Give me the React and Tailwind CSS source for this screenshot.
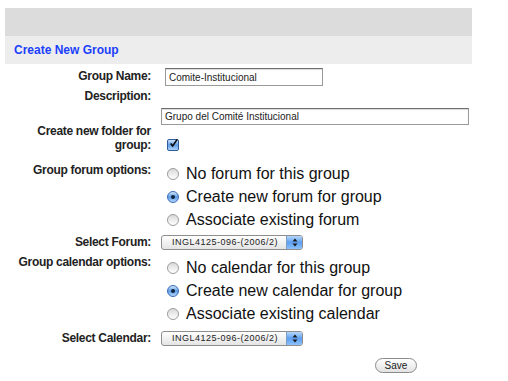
const font = { fontFamily: '"Liberation Sans", Arial, sans-serif' }

function Radio({ checked }) {
  if (checked) {
    return (
      <span className="w-[12px] h-[12px] rounded-full border border-[#3a6cb3] bg-linear-to-b from-[#d2e6fc] via-[#5c9be6] to-[#b4d6fb] flex items-center justify-center shrink-0">
        <span className="w-[4px] h-[4px] rounded-full bg-[#10223d]" />
      </span>
    )
  }
  return <span className="w-[12px] h-[12px] rounded-full border border-[#9c9c9c] bg-linear-to-b from-[#d9d9d9] to-white shrink-0" />
}

function RadioGroup({ options, selected }) {
  return (
    <div className="flex flex-col">
      {options.map((o, i) => (
        <div key={o} className="h-[23px] flex items-center pl-[6px] gap-[7px] text-[16px] text-[#111]">
          <Radio checked={i === selected} />
          <span>{o}</span>
        </div>
      ))}
    </div>
  )
}

function Select() {
  return (
    <div className="w-[142px] h-[15px] rounded-[3px] border border-[#8e8e8e] bg-linear-to-b from-white to-[#e4e4e4] flex items-center overflow-hidden">
      <span className="flex-1 pl-[10px] text-[9px] leading-none tracking-[0.5px] text-[#222]">INGL4125-096-(2006/2)</span>
      <span className="w-[16px] h-full bg-linear-to-b from-[#b6d7fa] via-[#5d9ff0] to-[#8cc2f8] border-l border-[#7a9cc8] flex items-center justify-center">
        <svg width="6" height="9" viewBox="0 0 6 9">
          <path d="M3 0.5 L5.5 3.5 H0.5 Z M3 8.5 L5.5 5.5 H0.5 Z" fill="#1a1a1a" />
        </svg>
      </span>
    </div>
  )
}

function Label({ children, className = '' }) {
  return (
    <div className={`w-[146px] shrink-0 text-right text-[12px] leading-[14px] font-bold tracking-[-0.3px] text-[#222] ${className}`}>
      {children}
    </div>
  )
}

export default function App() {
  return (
    <div className="w-[508px] h-[381px] bg-white pt-[8px] pl-[5px]" style={font}>
      <div className="w-[467px] h-[28px] bg-[#dcdcdc]" />
      <div className="w-[467px] h-[28px] bg-[#ededed] flex items-center pl-[9px]">
        <span className="text-[12px] font-bold text-[#1b3ffb]">Create New Group</span>
      </div>

      <div className="flex h-[24px]">
        <Label className="pt-[5px]">Group Name:</Label>
        <div className="ml-[14px] mt-[4px] w-[158px] h-[18px] border border-[#9a9a9a] border-t-[#6e6e6e] bg-white flex items-center pl-[3px] text-[10px] text-[#222] shadow-[inset_0_1px_1px_rgba(0,0,0,0.15)]">
          Comite-Institucional
        </div>
      </div>

      <div className="flex h-[16px]">
        <Label className="pt-[1px]">Description:</Label>
      </div>

      <div className="flex h-[20px]">
        <div className="w-[146px] shrink-0" />
        <div className="ml-[10px] mt-[4px] w-[308px] h-[17px] border border-[#9a9a9a] border-t-[#6e6e6e] bg-white flex items-center pl-[3px] text-[10px] text-[#222] shadow-[inset_0_1px_1px_rgba(0,0,0,0.15)]">
          Grupo del Comité Institucional
        </div>
      </div>

      <div className="flex h-[38px]">
        <Label>Create new folder for<br />group:</Label>
        <div className="ml-[16px] mt-[15px] w-[12px] h-[12px] rounded-[2px] border border-[#2e5c9a] bg-linear-to-b from-[#cfe4fb] via-[#5e9ce8] to-[#b0d4fa] flex items-center justify-center">
          <svg width="11" height="11" viewBox="0 0 11 11" className="-mt-[3px] ml-[1px]">
            <path d="M2 5.5 L4.5 8.5 L10 0.5" fill="none" stroke="#0b0b0b" strokeWidth="2" />
          </svg>
        </div>
      </div>

      <div className="flex h-[69px]">
        <Label className="pt-[1px]">Group forum options:</Label>
        <div className="ml-[10px]">
          <RadioGroup options={['No forum for this group', 'Create new forum for group', 'Associate existing forum']} selected={1} />
        </div>
      </div>

      <div className="flex h-[22px]">
        <Label className="pt-[4px]">Select Forum:</Label>
        <div className="ml-[10px] mt-[4px]"><Select /></div>
      </div>

      <div className="flex h-[72px]">
        <Label className="pt-[2px]">Group calendar options:</Label>
        <div className="ml-[10px] pt-[3px]">
          <RadioGroup options={['No calendar for this group', 'Create new calendar for group', 'Associate existing calendar']} selected={1} />
        </div>
      </div>

      <div className="flex h-[24px]">
        <Label className="pt-[6px]">Select Calendar:</Label>
        <div className="ml-[10px] mt-[6px]"><Select /></div>
      </div>

      <div className="flex">
        <div className="w-[146px] shrink-0" />
        <button className="ml-[224px] mt-[9px] w-[42px] h-[15px] rounded-full border border-[#8a8a8a] bg-linear-to-b from-white to-[#e2e2e2] text-[10px] leading-none text-[#222] flex items-center justify-center">
          Save
        </button>
      </div>
    </div>
  )
}
